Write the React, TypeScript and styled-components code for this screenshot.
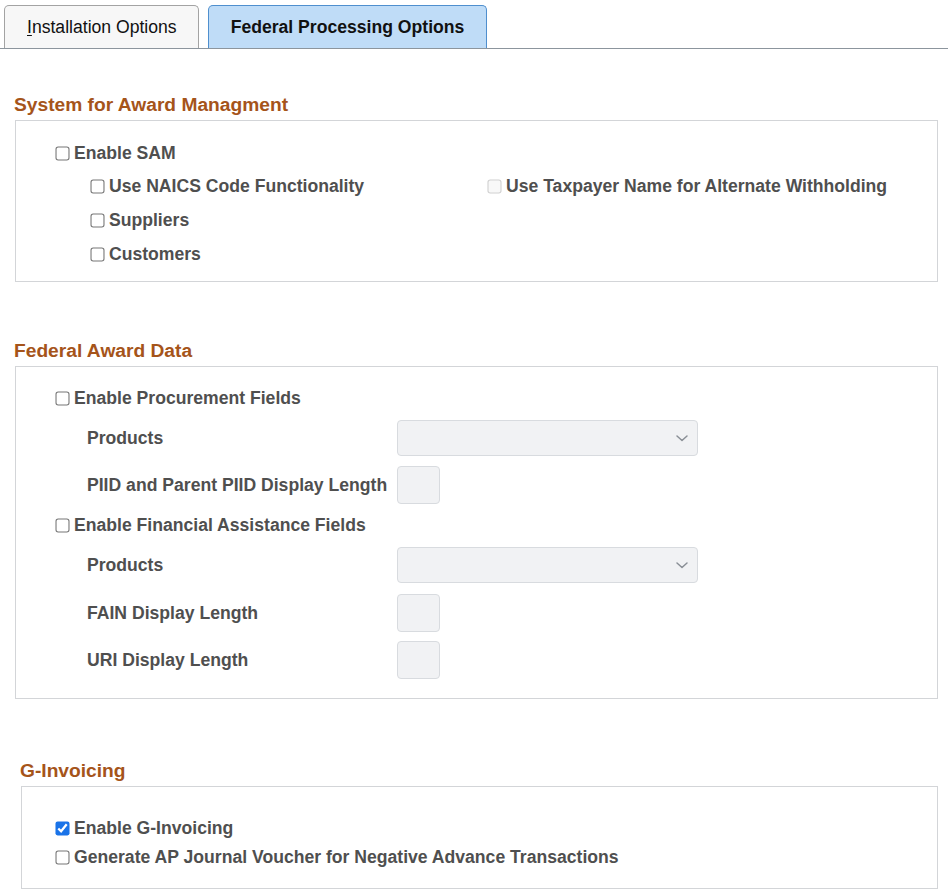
import styled, { createGlobalStyle } from 'styled-components';

const GlobalStyle = createGlobalStyle`
    body {
        margin: 0;
        background: #ffffff;
        font-family: 'Liberation Sans', Arial, sans-serif;
        color: #4f4f4f;
    }
`;

const Page = styled.div`
    width: 948px;
    padding-bottom: 6px;
`;

const TabBar = styled.div`
    display: flex;
    gap: 9px;
    padding: 5px 0 0 4px;
    border-bottom: 1px solid #8c959d;
`;

const Tab = styled.div<{ $active?: boolean }>`
    height: 43px;
    box-sizing: border-box;
    display: flex;
    align-items: center;
    font-size: 17.6px;
    color: #111;
    font-weight: ${p => (p.$active ? 700 : 400)};
    background: ${p => (p.$active ? '#bfdcf7' : '#f7f7f7')};
    border: 1px solid ${p => (p.$active ? '#4f8fce' : '#a3a3a3')};
    border-bottom: none;
    border-radius: 5px 5px 0 0;
    padding: 0 ${p => (p.$active ? '22px' : '21px')} 0 22px;

    u {
        text-decoration: underline;
        text-underline-offset: 2px;
    }
`;

const Section = styled.section<{ $top: number; $left: number }>`
    margin: ${p => p.$top}px 10px 0 ${p => p.$left}px;
`;

const Heading = styled.h2`
    margin: 0 0 4px -1px;
    font-size: 19.2px;
    line-height: 22px;
    font-weight: 700;
    color: #a5541a;
`;

const Box = styled.div<{ $pad: string }>`
    border: 1px solid #d3d5d8;
    padding: ${p => p.$pad};
    display: flex;
    flex-direction: column;
`;

const CheckRow = styled.label<{ $h?: number; $mt?: number }>`
    display: flex;
    align-items: center;
    gap: 5px;
    height: ${p => p.$h ?? 32}px;
    margin-top: ${p => p.$mt ?? 0}px;
    font-size: 17.6px;
    font-weight: 700;
    color: #4f4f4f;
    white-space: nowrap;
`;

const Check = styled.input.attrs({ type: 'checkbox' })`
    width: 13px;
    height: 13px;
    margin: 0;
    accent-color: #1a73e8;
    transform: scale(1.08);
`;

const SubGrid = styled.div`
    display: grid;
    grid-template-columns: 397px 1fr;
    grid-auto-rows: 34px;
    margin-left: 35px;
`;

const FieldRow = styled.div<{ $h: number; $mt: number }>`
    display: flex;
    align-items: center;
    height: ${p => p.$h}px;
    margin-top: ${p => p.$mt}px;
`;

const FieldLabel = styled.span`
    width: 310px;
    margin-left: 31px;
    font-size: 17.6px;
    font-weight: 700;
    color: #4f4f4f;
`;

const SelectBox = styled.div`
    width: 301px;
    height: 36px;
    box-sizing: border-box;
    background: #f1f2f4;
    border: 1px solid #d8dbdf;
    border-radius: 4px;
    display: flex;
    align-items: center;
    justify-content: flex-end;
    padding-right: 8px;
`;

const ShortInput = styled.div`
    width: 43px;
    height: 38px;
    box-sizing: border-box;
    background: #f1f2f4;
    border: 1px solid #d8dbdf;
    border-radius: 4px;
`;

const Chevron = () => (
    <svg width="14" height="14" viewBox="0 0 14 14" fill="none">
        <path d="M2 5l5 4.5L12 5" stroke="#8a8f96" strokeWidth="1.5" strokeLinecap="round" strokeLinejoin="round" />
    </svg>
);

const App = () => {
    return (
        <Page>
            <GlobalStyle />
            <TabBar>
                <Tab><span><u>I</u>nstallation Options</span></Tab>
                <Tab $active>Federal Processing Options</Tab>
            </TabBar>

            <Section $top={45} $left={15}>
                <Heading>System for Award Managment</Heading>
                <Box $pad="16px 0 10px 40px">
                    <CheckRow><Check />Enable SAM</CheckRow>
                    <SubGrid>
                        <CheckRow $h={34}><Check />Use NAICS Code Functionality</CheckRow>
                        <CheckRow $h={34}><Check disabled />Use Taxpayer Name for Alternate Withholding</CheckRow>
                        <CheckRow $h={34}><Check />Suppliers</CheckRow>
                        <span />
                        <CheckRow $h={34}><Check />Customers</CheckRow>
                    </SubGrid>
                </Box>
            </Section>

            <Section $top={58} $left={15}>
                <Heading>Federal Award Data</Heading>
                <Box $pad="15px 0 19px 40px">
                    <CheckRow><Check />Enable Procurement Fields</CheckRow>
                    <FieldRow $h={36} $mt={6}>
                        <FieldLabel>Products</FieldLabel>
                        <SelectBox><Chevron /></SelectBox>
                    </FieldRow>
                    <FieldRow $h={38} $mt={10}>
                        <FieldLabel>PIID and Parent PIID Display Length</FieldLabel>
                        <ShortInput />
                    </FieldRow>
                    <CheckRow $mt={5}><Check />Enable Financial Assistance Fields</CheckRow>
                    <FieldRow $h={36} $mt={6}>
                        <FieldLabel>Products</FieldLabel>
                        <SelectBox><Chevron /></SelectBox>
                    </FieldRow>
                    <FieldRow $h={38} $mt={11}>
                        <FieldLabel>FAIN Display Length</FieldLabel>
                        <ShortInput />
                    </FieldRow>
                    <FieldRow $h={38} $mt={9}>
                        <FieldLabel>URI Display Length</FieldLabel>
                        <ShortInput />
                    </FieldRow>
                </Box>
            </Section>

            <Section $top={61} $left={21}>
                <Heading>G-Invoicing</Heading>
                <Box $pad="27px 0 16px 34px">
                    <CheckRow $h={29}><Check defaultChecked />Enable G-Invoicing</CheckRow>
                    <CheckRow $h={29}><Check />Generate AP Journal Voucher for Negative Advance Transactions</CheckRow>
                </Box>
            </Section>
        </Page>
    );
};

export default App;
